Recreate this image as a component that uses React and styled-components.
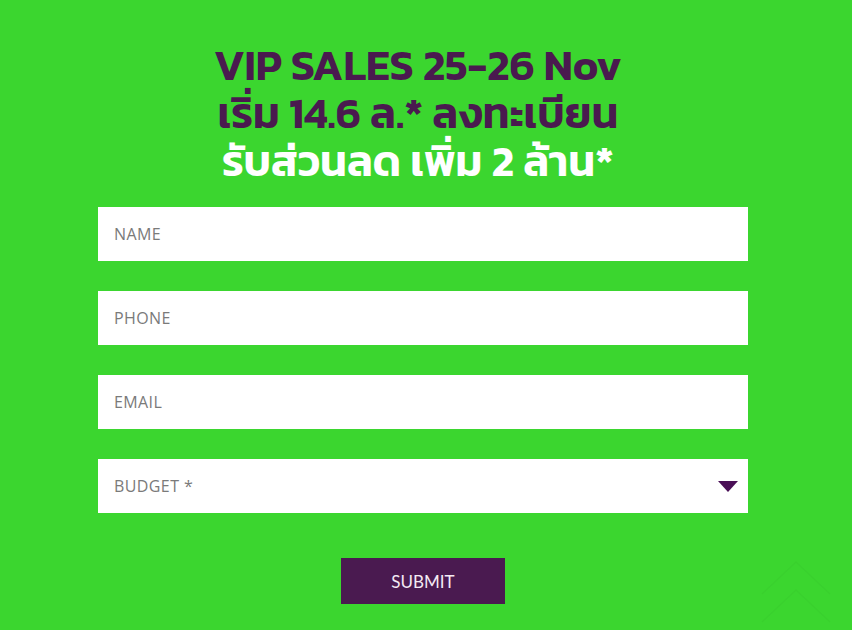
import React from "react";
import styled, { createGlobalStyle } from "styled-components";

const GlobalStyle = createGlobalStyle`
  html, body {
    margin: 0;
    padding: 0;
    background: #3bd62f;
  }
  body {
    font-family: "Open Sans", "Noto Sans", sans-serif;
  }
`;

const Page = styled.div`
  position: relative;
  width: 852px;
  height: 630px;
  overflow: hidden;
  background: #3bd62f;
  display: flex;
  flex-direction: column;
  align-items: center;
  padding-right: 6px;
  box-sizing: border-box;
`;

const Heading = styled.h1`
  margin: 41px 10px 0 0;
  font-family: "Kanit", "Noto Sans Thai", "Noto Sans", sans-serif;
  font-weight: 600;
  font-size: 43px;
  line-height: 48px;
  text-align: center;
  color: #4a1a4f;
`;

const Line = styled.div`
  color: ${(p) => (p.$light ? "#ffffff" : "#4a1a4f")};
`;

const Form = styled.form`
  margin-top: 22px;
  width: 650px;
  display: flex;
  flex-direction: column;
  gap: 30px;
`;

const Field = styled.div`
  position: relative;
  height: 54px;
  background: #ffffff;
  display: flex;
  align-items: center;
  padding: 0 16px;
  box-sizing: border-box;
`;

const Input = styled.input`
  border: none;
  outline: none;
  background: transparent;
  width: 100%;
  padding: 0;
  font-family: "Open Sans", sans-serif;
  font-size: 16px;
  letter-spacing: 0.4px;
  color: #555;
  &::placeholder {
    color: #7a7a7a;
  }
`;

const SelectText = styled.span`
  flex: 1;
  font-family: "Open Sans", sans-serif;
  font-size: 16px;
  letter-spacing: 0.4px;
  color: #7a7a7a;
`;

const Arrow = styled.span`
  width: 0;
  height: 0;
  margin-right: -6px;
  border-left: 10px solid transparent;
  border-right: 10px solid transparent;
  border-top: 11px solid #4a0f56;
`;

const Submit = styled.button`
  align-self: center;
  margin-top: 15px;
  width: 164px;
  height: 46px;
  border: none;
  background: #4a1a50;
  color: #f4eaf4;
  font-family: "Lato", sans-serif;
  font-size: 17px;
  cursor: pointer;
`;

const BackTop = styled.svg`
  position: absolute;
  right: 20px;
  bottom: 4px;
`;

export default function App() {
  return (
    <Page>
      <GlobalStyle />
      <Heading>
        <Line>VIP SALES 25-26 Nov</Line>
        <Line>เริ่ม 14.6 ล.* ลงทะเบียน</Line>
        <Line $light>รับส่วนลด เพิ่ม 2 ล้าน*</Line>
      </Heading>
      <Form onSubmit={(e) => e.preventDefault()}>
        <Field>
          <Input placeholder="NAME" />
        </Field>
        <Field>
          <Input placeholder="PHONE" />
        </Field>
        <Field>
          <Input placeholder="EMAIL" />
        </Field>
        <Field>
          <SelectText>BUDGET *</SelectText>
          <Arrow />
        </Field>
        <Submit type="submit">SUBMIT</Submit>
      </Form>
      <BackTop width="72" height="66" viewBox="0 0 72 66">
        <path d="M2 34 L36 2 L70 34 M2 62 L36 30 L70 62" fill="none" stroke="rgba(0,0,0,0.025)" strokeWidth="1.5" />
      </BackTop>
    </Page>
  );
}
